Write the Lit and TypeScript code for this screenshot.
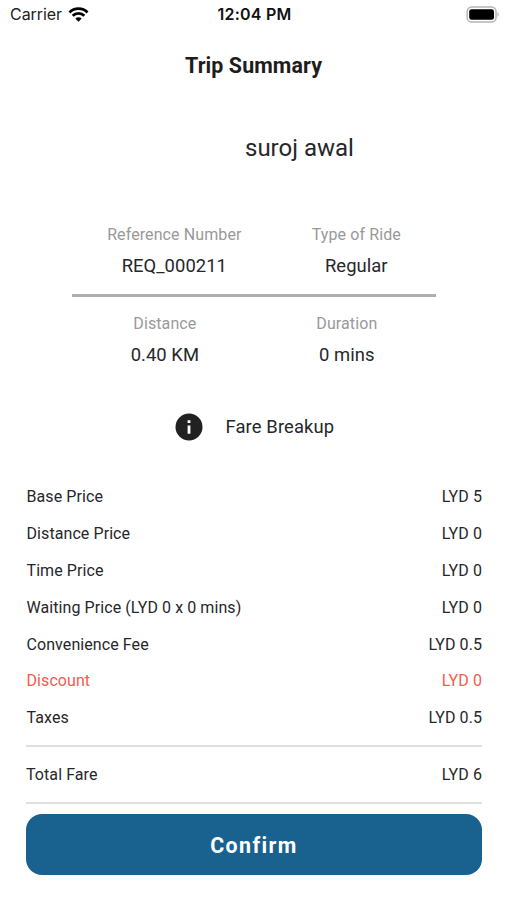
import { LitElement, html, css } from "lit";
import { customElement } from "lit/decorators.js";

const fares = [
  { label: "Base Price", value: "LYD 5" },
  { label: "Distance Price", value: "LYD 0" },
  { label: "Time Price", value: "LYD 0" },
  { label: "Waiting Price (LYD 0 x 0 mins)", value: "LYD 0" },
  { label: "Convenience Fee", value: "LYD 0.5" },
  { label: "Discount", value: "LYD 0", discount: true },
  { label: "Taxes", value: "LYD 0.5" },
];

@customElement("app-root")
export class AppRoot extends LitElement {
  static styles = css`
    :host { display: flex; flex-direction: column; box-sizing: border-box; width: 507px; height: 900px; background: #fff; color: #26272a; font-family: Roboto, sans-serif; overflow: hidden; }
    .status { display: grid; grid-template-columns: 1fr auto 1fr; align-items: center; height: 28px; padding: 0 8px 0 10px; font: 16px Inter, sans-serif; color: #222; flex: none; }
    .carrier { display: flex; align-items: center; gap: 6px; letter-spacing: -.05px; }
    .time { font-weight: 600; color: #111; letter-spacing: .25px; }
    .battery { justify-self: end; }
    svg { display: block; }
    h1 { margin: 23px 0 0; text-align: center; font-size: 21.4px; line-height: 30px; font-weight: 700; letter-spacing: .1px; color: #1d1d1d; }
    .name { margin: 50px 0 0 245px; font-size: 24px; line-height: 34px; }
    .details { margin: 55px 71px 0 72px; }
    .pair { display: flex; justify-content: space-around; text-align: center; }
    .pair + .pair { border-top: 3px solid #afafaf; margin-top: 13px; padding-top: 12px; }
    .caption { font-size: 16px; line-height: 30px; color: #999; letter-spacing: .1px; }
    .value { font-size: 18.4px; line-height: 31px; letter-spacing: .06px; }
    .breakup { display: flex; align-items: center; margin: 39.6px 0 0 175px; gap: 22.5px; font-size: 18.4px; line-height: 34px; letter-spacing: .12px; }
    .rows { margin: 35.9px 25px 0 26.5px; }
    .row { display: flex; justify-content: space-between; font-size: 16px; line-height: 36.8px; letter-spacing: .08px; }
    .discount { color: #f35b4e; }
    .total { margin: 7.9px 25px 0 26px; border-top: 2px solid #dfe1e1; border-bottom: 2px solid #dfe1e1; line-height: 55px; }
    button { margin: 10px 25px 0 26px; padding: 2px 0 0; height: 61px; flex: none; border: 0; border-radius: 16px; background: #19618f; color: #fff; font: 700 21.4px Roboto, sans-serif; letter-spacing: 1.4px; }
  `;
  render() {
    return html`
      <div class="status">
        <div class="carrier"><span>Carrier</span>
          <svg width="21" height="15" viewBox="0 0 20 15"><g fill="none" stroke="#000" stroke-width="2.8"><path d="M1 5.4a12.7 12.7 0 0 1 18 0"/><path d="M4.2 8.7a8.2 8.2 0 0 1 11.6 0"/></g><path d="M10 14.8 6.8 11.6a4.5 4.5 0 0 1 6.4 0z"/></svg>
        </div>
        <span class="time">12:04 PM</span>
        <svg class="battery" width="33" height="17" viewBox="0 0 33 17"><rect x="1.2" y="1" width="28.8" height="15" rx="4.6" fill="none" stroke="#b5b5b5" stroke-width="1.5"/><rect x="3.2" y="3.2" width="24.8" height="10.6" rx="2.4"/><path d="M31.5 6q2.4 2.5 0 5z" fill="#aaa"/></svg>
      </div>
      <h1>Trip Summary</h1>
      <div class="name">suroj awal</div>
      <section class="details">
        <div class="pair"><div><div class="caption">Reference Number</div><div class="value">REQ_000211</div></div><div><div class="caption">Type of Ride</div><div class="value">Regular</div></div></div>
        <div class="pair"><div><div class="caption">Distance</div><div class="value">0.40 KM</div></div><div><div class="caption">Duration</div><div class="value">0 mins</div></div></div>
      </section>
      <div class="breakup"><svg width="28" height="28" viewBox="0 0 28 28"><circle cx="14" cy="14" r="13.5" fill="#212121"/><path d="M12.6 7.2h2.8V10h-2.8zM12.6 12.4h2.8v8.3h-2.8z" fill="#fff"/></svg><span>Fare Breakup</span></div>
      <div class="rows">${fares.map((f) => html`<div class="row ${f.discount ? "discount" : ""}"><span>${f.label}</span><span>${f.value}</span></div>`)}</div>
      <div class="row total"><span>Total Fare</span><span>LYD 6</span></div>
      <button>Confirm</button>
    `;
  }
}
